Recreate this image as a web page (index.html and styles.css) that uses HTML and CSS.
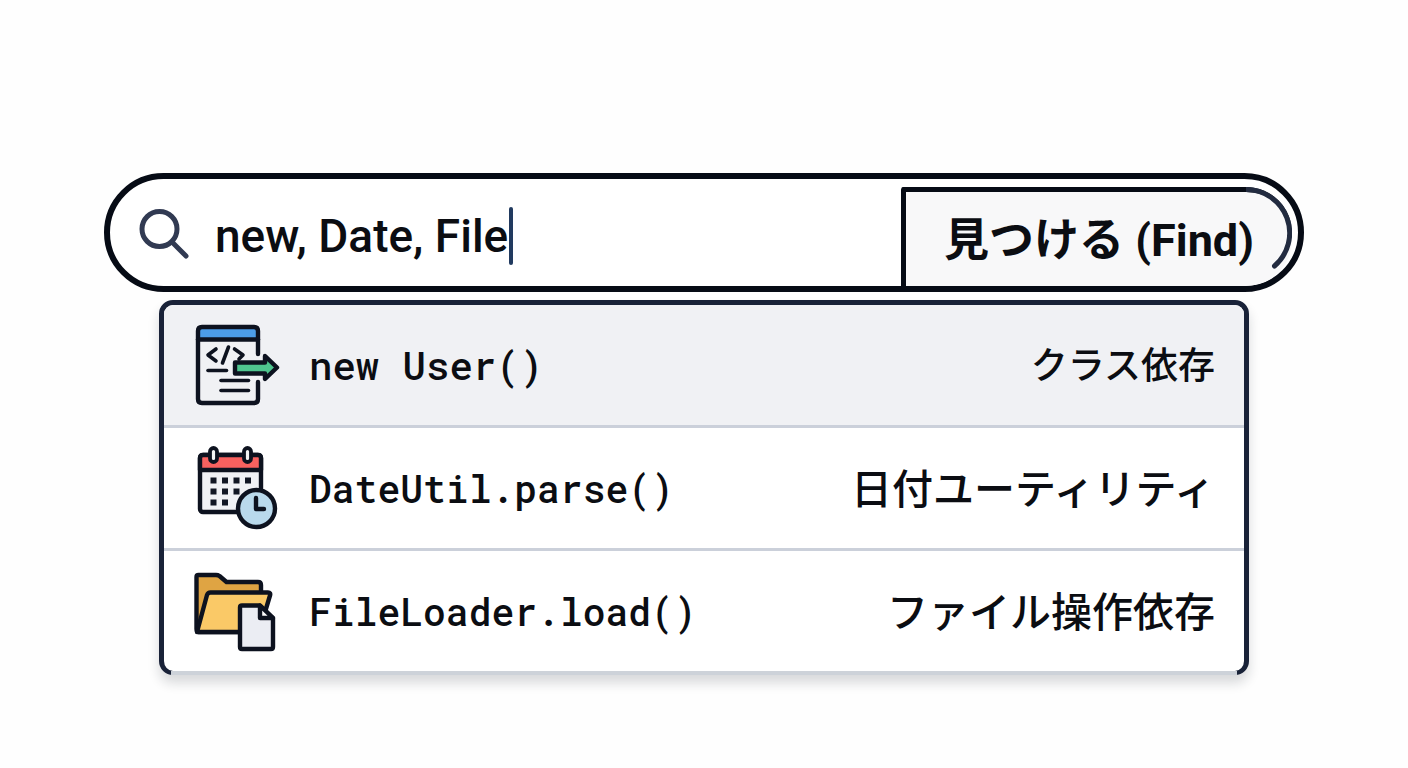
FILE: index.html
```html
<!DOCTYPE html>
<html lang="ja">

<head>
  <meta charset="UTF-8">
  <meta name="viewport" content="width=device-width, initial-scale=1.0">
  <title>見つける (Find)</title>
  <link rel="stylesheet" href="styles.css">
</head>

<body>
  <div class="finder">
    <form class="bar" role="search">
      <label class="field">
        <svg class="search" viewBox="0 0 52 52" aria-label="検索">
          <circle cx="21.5" cy="22" r="17.5" />
          <path d="M35 36 L48 49" />
        </svg>
        <input class="query" type="text" value="new, Date, File" size="13">
        <span class="caret"></span>
      </label>
      <button class="find" type="button">
        見つける (Find)
        <svg class="arc" viewBox="0 0 46 92">
          <path d="M0 2.5 A43.5 43.5 0 0 1 28.5 79" />
        </svg>
      </button>
    </form>

    <ul class="list">
      <li class="item active">
        <svg class="icon" viewBox="0 0 88 88">
          <path d="M4 18 V10 Q4 6 8 6 H60 Q64 6 64 10 V18 Z" fill="#4c9de8" stroke="none" />
          <path d="M64 33 V10 Q64 6 60 6 H8 Q4 6 4 10 V78 Q4 82 8 82 H60 Q64 82 64 78 V61" />
          <path d="M4 18.5 H64" />
          <g stroke-width="3.6">
            <path d="M22 28 L14 34 L22 40" />
            <path d="M34.5 26 L28.5 42" />
            <path d="M40.5 28 L49 34 L45 38" />
            <path d="M14 49.5 H32.5" />
            <path d="M27 59.5 H54.5" />
            <path d="M27 69.5 H54.5" />
          </g>
          <path d="M41 41.5 H71 V35 L83 46.5 L71 58 V52.5 H41 Z" fill="#4fc58f" />
        </svg>
        <code class="name">new User()</code>
        <span class="kind">クラス依存</span>
      </li>
      <li class="item">
        <svg class="icon" viewBox="0 0 88 88">
          <rect x="6" y="11" width="61" height="57" rx="3" fill="#f0f1f5" />
          <path d="M6 26 V14 Q6 11 9 11 H64 Q67 11 67 14 V26 Z" fill="#f8615f" />
          <g fill="#f5f5f5" stroke-width="3.8">
            <rect x="16" y="4" width="7" height="14" rx="3.5" />
            <rect x="50" y="4" width="7" height="14" rx="3.5" />
          </g>
          <g fill="#111624" stroke="none">
            <rect x="16.5" y="33.5" width="6" height="6" />
            <rect x="28" y="33.5" width="6" height="6" />
            <rect x="39.5" y="33.5" width="6" height="6" />
            <rect x="51" y="33.5" width="6" height="6" />
            <rect x="16.5" y="44.5" width="6" height="6" />
            <rect x="28" y="44.5" width="6" height="6" />
            <rect x="39.5" y="44.5" width="6" height="6" />
            <rect x="16.5" y="55.5" width="6" height="6" />
            <rect x="28" y="55.5" width="6" height="6" />
          </g>
          <circle cx="62.5" cy="64.5" r="18.5" fill="#b9d9ec" />
          <path d="M62 54 V65 H70" />
        </svg>
        <code class="name">DateUtil.parse()</code>
        <span class="kind">日付ユーティリティ</span>
      </li>
      <li class="item">
        <svg class="icon" viewBox="0 0 88 88">
          <path d="M2.5 62 V10 Q2.5 8 4.5 8 H22 Q24 8 25.5 9 L32.5 15 H64 Q67 15 67 18 V50 L50 65 H4.5 Q2.5 65 2.5 62 Z" fill="#dfa443" />
          <path d="M3 65 L13 28 Q14 25.5 16.5 25.5 H74 Q77 25.5 76 28.5 L65 65 Z" fill="#fac967" />
          <path d="M48 38.5 H66 L79 51 V80 Q79 82 77 82 H48 Q46 82 46 80 V40.5 Q46 38.5 48 38.5 Z" fill="#ebedf3" />
          <path d="M66 38.5 V51 H79 Z" fill="#fefefe" />
        </svg>
        <code class="name">FileLoader.load()</code>
        <span class="kind">ファイル操作依存</span>
      </li>
    </ul>
  </div>
</body>

</html>
```
FILE: styles.css
```css
* {
  margin: 0;
  padding: 0;
  box-sizing: border-box;
  list-style: none;
}

body {
  min-height: 100vh;
  padding-top: 173px;
  background-color: #fefefe;
  color: #0b0d12;
  font-family: Roboto, "Noto Sans CJK JP", sans-serif;
}

.finder {
  max-width: 1200px;
  margin: 0 auto;
}

.bar {
  display: flex;
  height: 119px;
  border: 6px solid #060b15;
  border-radius: 60px;
  background-color: #fff;
  overflow: hidden;
}

.field {
  flex: 1;
  display: flex;
  align-items: center;
  padding: 6px 0 0 28px;
}

.search {
  width: 52px;
  height: 52px;
  margin: 0 25px 5px 0;
  fill: none;
  stroke: #313a52;
  stroke-width: 5;
  stroke-linecap: round;
}

.query {
  field-sizing: content;
  border: none;
  outline: none;
  background: none;
  color: #0b0d12;
  font-family: Roboto, "Noto Sans CJK JP", sans-serif;
  font-size: 46px;
  font-weight: 500;
  line-height: 56px;
}

.caret {
  width: 4px;
  height: 58px;
  margin-left: 1px;
  border-radius: 2px;
  background-color: #213a5f;
}

.find {
  position: relative;
  margin: 8px 6px 0 0;
  padding: 0 38px 6px;
  border: none;
  border-top: 5px solid #060b15;
  border-left: 5px solid #060b15;
  border-radius: 3px 46px 46px 0;
  background-color: #f8f8f9;
  color: #0b0d12;
  font-family: Roboto, "Noto Sans CJK JP", sans-serif;
  font-size: 45px;
  font-weight: bold;
}

/* the rim that follows the rounded end of the button */
.arc {
  position: absolute;
  top: -5px;
  right: 0;
  width: 46px;
  height: 92px;
  fill: none;
  stroke: #222b40;
  stroke-width: 5;
  stroke-linecap: round;
}

.list {
  position: relative;
  margin: 8px 55px 0;
  border: 5px solid #192238;
  border-bottom-width: 4px;
  border-radius: 14px;
  background-color: #fff;
  box-shadow: 0 8px 12px rgba(20, 25, 40, .16);
}

/* light bottom edge between the two dark corners */
.list::after {
  content: "";
  position: absolute;
  left: 7px;
  right: 7px;
  bottom: -4px;
  height: 4px;
  background-color: #cdd2d9;
}

.item {
  display: flex;
  align-items: center;
  height: 123px;
  padding: 0 29px 0 30px;
  border-bottom: 3px solid #cbd0da;
}

.item:last-child {
  height: 120px;
  border-bottom: none;
}

.item.active {
  border-radius: 9px 9px 0 0;
  background-color: #f0f1f4;
}

.icon {
  width: 88px;
  height: 88px;
  margin-right: 27px;
  fill: none;
  stroke: #0d121f;
  stroke-width: 4.4;
  stroke-linecap: round;
  stroke-linejoin: round;
}

.name {
  flex: 1;
  font-family: "Roboto Mono", "DejaVu Sans Mono", monospace;
  font-size: 38px;
  font-weight: 500;
}

.kind {
  padding-bottom: 4px;
  font-family: "Noto Sans CJK JP", sans-serif;
  font-size: 41px;
  font-weight: 500;
}

.active .name {
  font-size: 39px;
}

.active .kind {
  font-size: 37px;
}
```
